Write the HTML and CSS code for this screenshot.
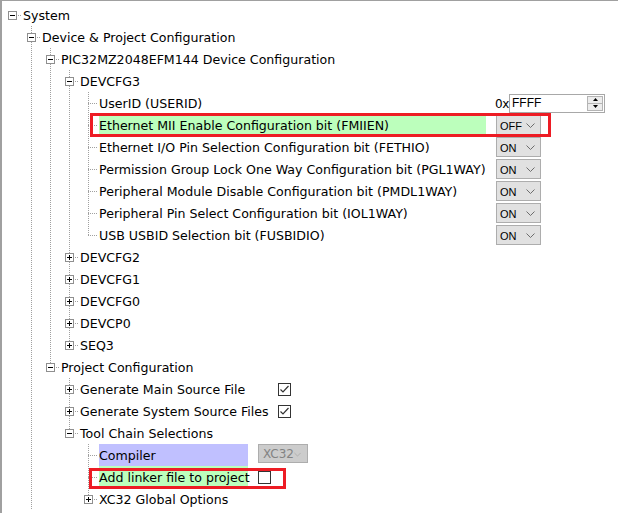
FILE: index.html
```html
<!DOCTYPE html>
<html>
<head>
<meta charset="utf-8">
<link rel="stylesheet" href="styles.css">
</head>
<body>
<div class="page">
  <div class="tree">
    <div class="row"><span class="node root"><i class="box minus"></i></span><span class="label">System</span></div>
    <div class="row"><span class="g"></span><span class="node mid"><i class="box minus"></i></span><span class="label">Device &amp; Project Configuration</span></div>
    <div class="row"><span class="g"></span><span class="g l"></span><span class="node mid"><i class="box minus"></i></span><span class="label">PIC32MZ2048EFM144 Device Configuration</span></div>
    <div class="row"><span class="g"></span><span class="g l"></span><span class="g l"></span><span class="node mid"><i class="box minus"></i></span><span class="label">DEVCFG3</span></div>

    <div class="row"><span class="g"></span><span class="g l"></span><span class="g l"></span><span class="g l"></span><span class="node mid"></span><span class="label dev">UserID (USERID)</span>
      <span class="val hexval"><span class="hex">0x</span><span class="spin"><span class="spin-text">FFFF</span><span class="spin-btns"><span class="sb up"><svg width="5" height="3" viewBox="0 0 5 3"><path d="M0 3 L2.5 0 L5 3Z" fill="#000"/></svg></span><span class="sb down"><svg width="5" height="3" viewBox="0 0 5 3"><path d="M0 0 L2.5 3 L5 0Z" fill="#000"/></svg></span></span></span></span></div>
    <div class="row"><span class="g"></span><span class="g l"></span><span class="g l"></span><span class="g l"></span><span class="node mid"></span><span class="label dev green">Ethernet MII Enable Configuration bit (FMIIEN)</span>
      <span class="val dd"><span>OFF</span><svg width="9" height="5" viewBox="0 0 9 5"><polyline points="0.5,0.5 4.5,4.5 8.5,0.5" fill="none" stroke="#6d6d6d"/></svg></span></div>
    <div class="row"><span class="g"></span><span class="g l"></span><span class="g l"></span><span class="g l"></span><span class="node mid"></span><span class="label dev">Ethernet I/O Pin Selection Configuration bit (FETHIO)</span>
      <span class="val dd"><span>ON</span><svg width="9" height="5" viewBox="0 0 9 5"><polyline points="0.5,0.5 4.5,4.5 8.5,0.5" fill="none" stroke="#6d6d6d"/></svg></span></div>
    <div class="row"><span class="g"></span><span class="g l"></span><span class="g l"></span><span class="g l"></span><span class="node mid"></span><span class="label dev">Permission Group Lock One Way Configuration bit (PGL1WAY)</span>
      <span class="val dd"><span>ON</span><svg width="9" height="5" viewBox="0 0 9 5"><polyline points="0.5,0.5 4.5,4.5 8.5,0.5" fill="none" stroke="#6d6d6d"/></svg></span></div>
    <div class="row"><span class="g"></span><span class="g l"></span><span class="g l"></span><span class="g l"></span><span class="node mid"></span><span class="label dev">Peripheral Module Disable Configuration bit (PMDL1WAY)</span>
      <span class="val dd"><span>ON</span><svg width="9" height="5" viewBox="0 0 9 5"><polyline points="0.5,0.5 4.5,4.5 8.5,0.5" fill="none" stroke="#6d6d6d"/></svg></span></div>
    <div class="row"><span class="g"></span><span class="g l"></span><span class="g l"></span><span class="g l"></span><span class="node mid"></span><span class="label dev">Peripheral Pin Select Configuration bit (IOL1WAY)</span>
      <span class="val dd"><span>ON</span><svg width="9" height="5" viewBox="0 0 9 5"><polyline points="0.5,0.5 4.5,4.5 8.5,0.5" fill="none" stroke="#6d6d6d"/></svg></span></div>
    <div class="row"><span class="g"></span><span class="g l"></span><span class="g l"></span><span class="g l"></span><span class="node last"></span><span class="label dev">USB USBID Selection bit (FUSBIDIO)</span>
      <span class="val dd"><span>ON</span><svg width="9" height="5" viewBox="0 0 9 5"><polyline points="0.5,0.5 4.5,4.5 8.5,0.5" fill="none" stroke="#6d6d6d"/></svg></span></div>

    <div class="row"><span class="g"></span><span class="g l"></span><span class="g l"></span><span class="node mid"><i class="box plus"></i></span><span class="label">DEVCFG2</span></div>
    <div class="row"><span class="g"></span><span class="g l"></span><span class="g l"></span><span class="node mid"><i class="box plus"></i></span><span class="label">DEVCFG1</span></div>
    <div class="row"><span class="g"></span><span class="g l"></span><span class="g l"></span><span class="node mid"><i class="box plus"></i></span><span class="label">DEVCFG0</span></div>
    <div class="row"><span class="g"></span><span class="g l"></span><span class="g l"></span><span class="node mid"><i class="box plus"></i></span><span class="label">DEVCP0</span></div>
    <div class="row"><span class="g"></span><span class="g l"></span><span class="g l"></span><span class="node last"><i class="box plus"></i></span><span class="label">SEQ3</span></div>

    <div class="row"><span class="g"></span><span class="g l"></span><span class="node last"><i class="box minus"></i></span><span class="label">Project Configuration</span></div>
    <div class="row"><span class="g"></span><span class="g l"></span><span class="g"></span><span class="node mid"><i class="box plus"></i></span><span class="label proj">Generate Main Source File</span>
      <span class="val cb"><svg width="11" height="11" viewBox="0 0 11 11"><polyline points="1.5,5.5 4,8 9.5,2" fill="none" stroke="#333" stroke-width="1.2"/></svg></span></div>
    <div class="row"><span class="g"></span><span class="g l"></span><span class="g"></span><span class="node mid"><i class="box plus"></i></span><span class="label proj">Generate System Source Files</span>
      <span class="val cb"><svg width="11" height="11" viewBox="0 0 11 11"><polyline points="1.5,5.5 4,8 9.5,2" fill="none" stroke="#333" stroke-width="1.2"/></svg></span></div>
    <div class="row"><span class="g"></span><span class="g l"></span><span class="g"></span><span class="node last"><i class="box minus"></i></span><span class="label">Tool Chain Selections</span></div>
    <div class="row"><span class="g"></span><span class="g l"></span><span class="g"></span><span class="g"></span><span class="node mid"></span><span class="label tool lavender">Compiler</span>
      <span class="val dd dis"><span>XC32</span><svg width="9" height="5" viewBox="0 0 9 5"><polyline points="0.5,0.5 4.5,4.5 8.5,0.5" fill="none" stroke="#a9a9a9"/></svg></span></div>
    <div class="row"><span class="g"></span><span class="g l"></span><span class="g"></span><span class="g"></span><span class="node mid"></span><span class="label tool green">Add linker file to project</span>
      <span class="val cb empty"></span></div>
    <div class="row"><span class="g"></span><span class="g l"></span><span class="g"></span><span class="g"></span><span class="node last"><i class="box plus"></i></span><span class="label">XC32 Global Options</span></div>
  </div>
  <div class="mark mark1"></div>
  <div class="mark mark2"></div>
</div>
</body>
</html>
```

FILE: styles.css
```css
* { box-sizing: border-box; }
html, body { margin: 0; padding: 0; background: #fff; }
body {
  width: 618px;
  height: 513px;
  overflow: hidden;
  font-family: "DejaVu Sans", sans-serif;
  font-size: 12.6px;
  color: #000;
}
.page { position: relative; height: 513px; }
.tree {
  height: 513px;
  border-left: 2px solid #a0a0a0;
  border-top: 1px solid #a0a0a0;
  padding-top: 3px;
}
.row {
  display: flex;
  height: 22px;
  align-items: center;
  white-space: nowrap;
}
.g { flex: none; width: 19px; height: 22px; }
.g.l {
  background: linear-gradient(#a0a0a0 50%, transparent 50%) 10px 0 / 1px 2px repeat-y;
}
.node {
  flex: none;
  width: 21px;
  height: 22px;
  position: relative;
}
.node::after {
  content: "";
  position: absolute;
  left: 10px;
  top: 11px;
  width: 9px;
  height: 1px;
  background: linear-gradient(to right, #a0a0a0 50%, transparent 50%) 0 0 / 2px 1px repeat-x;
}
.node.mid::before,
.node.last::before {
  content: "";
  position: absolute;
  left: 10px;
  top: 0;
  width: 1px;
  height: 22px;
  background: linear-gradient(#a0a0a0 50%, transparent 50%) 0 0 / 1px 2px repeat-y;
}
.node.last::before { height: 11px; }
.box {
  position: absolute;
  z-index: 1;
  left: 6px;
  top: 7px;
  width: 9px;
  height: 9px;
  border: 1px solid #8f8f8f;
  background: #fff;
  display: grid;
  place-items: center;
}
.box::before {
  content: "";
  grid-area: 1 / 1;
  width: 5px;
  height: 1px;
  background: #000;
}
.box.plus::after {
  content: "";
  grid-area: 1 / 1;
  width: 1px;
  height: 5px;
  background: #000;
}
.label {
  flex: none;
  height: 22px;
  line-height: 24px;
}
.label.dev { width: 387px; }
.label.proj { width: 188px; }
.label.tool { width: 149px; }
.green { background: #bcffbc; }
.lavender { background: #c0c0ff; }
.val { flex: none; margin-left: 10px; }

.dd {
  width: 45px;
  height: 20px;
  border: 1px solid #adadad;
  background: #e1e1e1;
  display: flex;
  align-items: center;
  justify-content: space-between;
  padding: 1px 5px 0 3px;
  font-family: "Liberation Sans", sans-serif;
  font-size: 11px;
  color: #000;
}
.dd.dis {
  width: 50px;
  height: 19px;
  align-self: flex-start;
  background: #cccccc;
  color: #838383;
  font-family: "DejaVu Sans", sans-serif;
  font-size: 12px;
  padding: 1px 6px 0 4px;
}

.hexval {
  display: flex;
  align-items: center;
  margin-left: 9px;
}
.hex { width: 14px; font-size: 12px; letter-spacing: -0.5px; padding-top: 1px; }
.spin {
  width: 96px;
  height: 19px;
  border: 1px solid #a8a8a8;
  background: #fff;
  display: flex;
  align-items: center;
  justify-content: space-between;
  padding: 0 1px 0 2px;
  font-family: "Liberation Sans", sans-serif;
  font-size: 12px;
}
.spin-btns {
  width: 16px;
  height: 15px;
  border: 1px solid #b4b4b4;
  background: #ececec;
  display: flex;
  flex-direction: column;
}
.sb {
  flex: 1;
  display: flex;
  align-items: center;
  justify-content: center;
}
.sb.up { border-bottom: 1px solid #b4b4b4; }

.cb {
  width: 13px;
  height: 13px;
  border: 1px solid #333;
  background: #fff;
  display: flex;
  align-items: center;
  justify-content: center;
}

.mark {
  position: absolute;
  border: 3px solid #ed1c24;
}
.mark1 { left: 90px; top: 113px; width: 461px; height: 24px; }
.mark2 { left: 89px; top: 468px; width: 197px; height: 21px; }
```
